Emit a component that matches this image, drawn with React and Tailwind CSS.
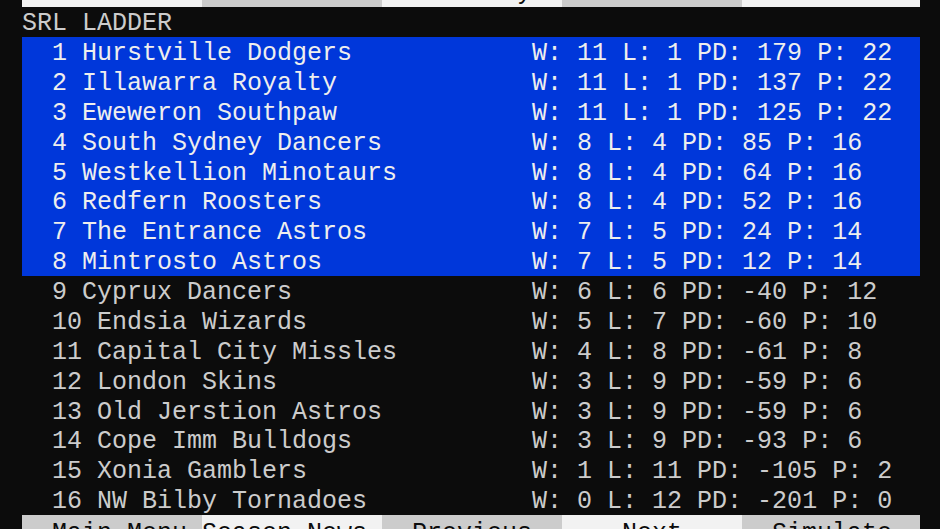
import React from "react";

const teams = [
  ["Hurstville Dodgers", 11, 1, 179, 22],
  ["Illawarra Royalty", 11, 1, 137, 22],
  ["Eweweron Southpaw", 11, 1, 125, 22],
  ["South Sydney Dancers", 8, 4, 85, 16],
  ["Westkellion Minotaurs", 8, 4, 64, 16],
  ["Redfern Roosters", 8, 4, 52, 16],
  ["The Entrance Astros", 7, 5, 24, 14],
  ["Mintrosto Astros", 7, 5, 12, 14],
  ["Cyprux Dancers", 6, 6, -40, 12],
  ["Endsia Wizards", 5, 7, -60, 10],
  ["Capital City Missles", 4, 8, -61, 8],
  ["London Skins", 3, 9, -59, 6],
  ["Old Jerstion Astros", 3, 9, -59, 6],
  ["Cope Imm Bulldogs", 3, 9, -93, 6],
  ["Xonia Gamblers", 1, 11, -105, 2],
  ["NW Bilby Tornadoes", 0, 12, -201, 0],
];

const topMenu = ["  Ladder    ", "  Teams     ", "   History  ", "  Stats     ", "  Results   "];
const bottomMenu = ["  Main Menu ", "Season News ", "  Previous  ", "    Next    ", "  Simulate  "];

function MenuBar({ items, invert, cellClass }) {
  return (
    <div className="flex">
      {items.map((label, i) => {
        const light = invert ? i % 2 === 1 : i % 2 === 0;
        return (
          <div
            key={i}
            className={`whitespace-pre text-[#0c0c0c] ${cellClass} ${
              i === 4 ? "w-[178px]" : "w-[180px]"
            } ${light ? "bg-[#f2f2f2]" : "bg-[#cccccc]"}`}
          >
            {label}
          </div>
        );
      })}
    </div>
  );
}

export default function App() {
  return (
    <div className="w-[940px] h-[529px] overflow-hidden bg-[#0c0c0c] pl-[22px] font-['Liberation_Mono','Courier_New',monospace] text-[25px]">
      <div className="w-[898px]">
        {/* menu row scrolled off the top */}
        <div className="h-[7px] overflow-hidden flex flex-col justify-end">
          <MenuBar items={topMenu} cellClass="h-[30px] leading-[32px]" />
        </div>

        <div className="h-[30px] leading-[34px] text-[#cccccc] whitespace-pre">SRL LADDER</div>

        {/* ladder rows, top 8 highlighted */}
        {teams.map(([name, w, l, pd, p], i) => {
          const left = `  ${i + 1} ${name}`.padEnd(34);
          const right = `W: ${w} L: ${l} PD: ${pd} P: ${p}`;
          const top8 = i < 8;
          return (
            <div
              key={name}
              className={`h-[29.875px] leading-[34px] whitespace-pre ${
                top8 ? "bg-[#0037da] text-[#eeeeee]" : "text-[#cccccc]"
              }`}
            >
              {left + right}
            </div>
          );
        })}

        <MenuBar items={bottomMenu} invert cellClass="h-[30px] leading-[37px]" />
      </div>
    </div>
  );
}
